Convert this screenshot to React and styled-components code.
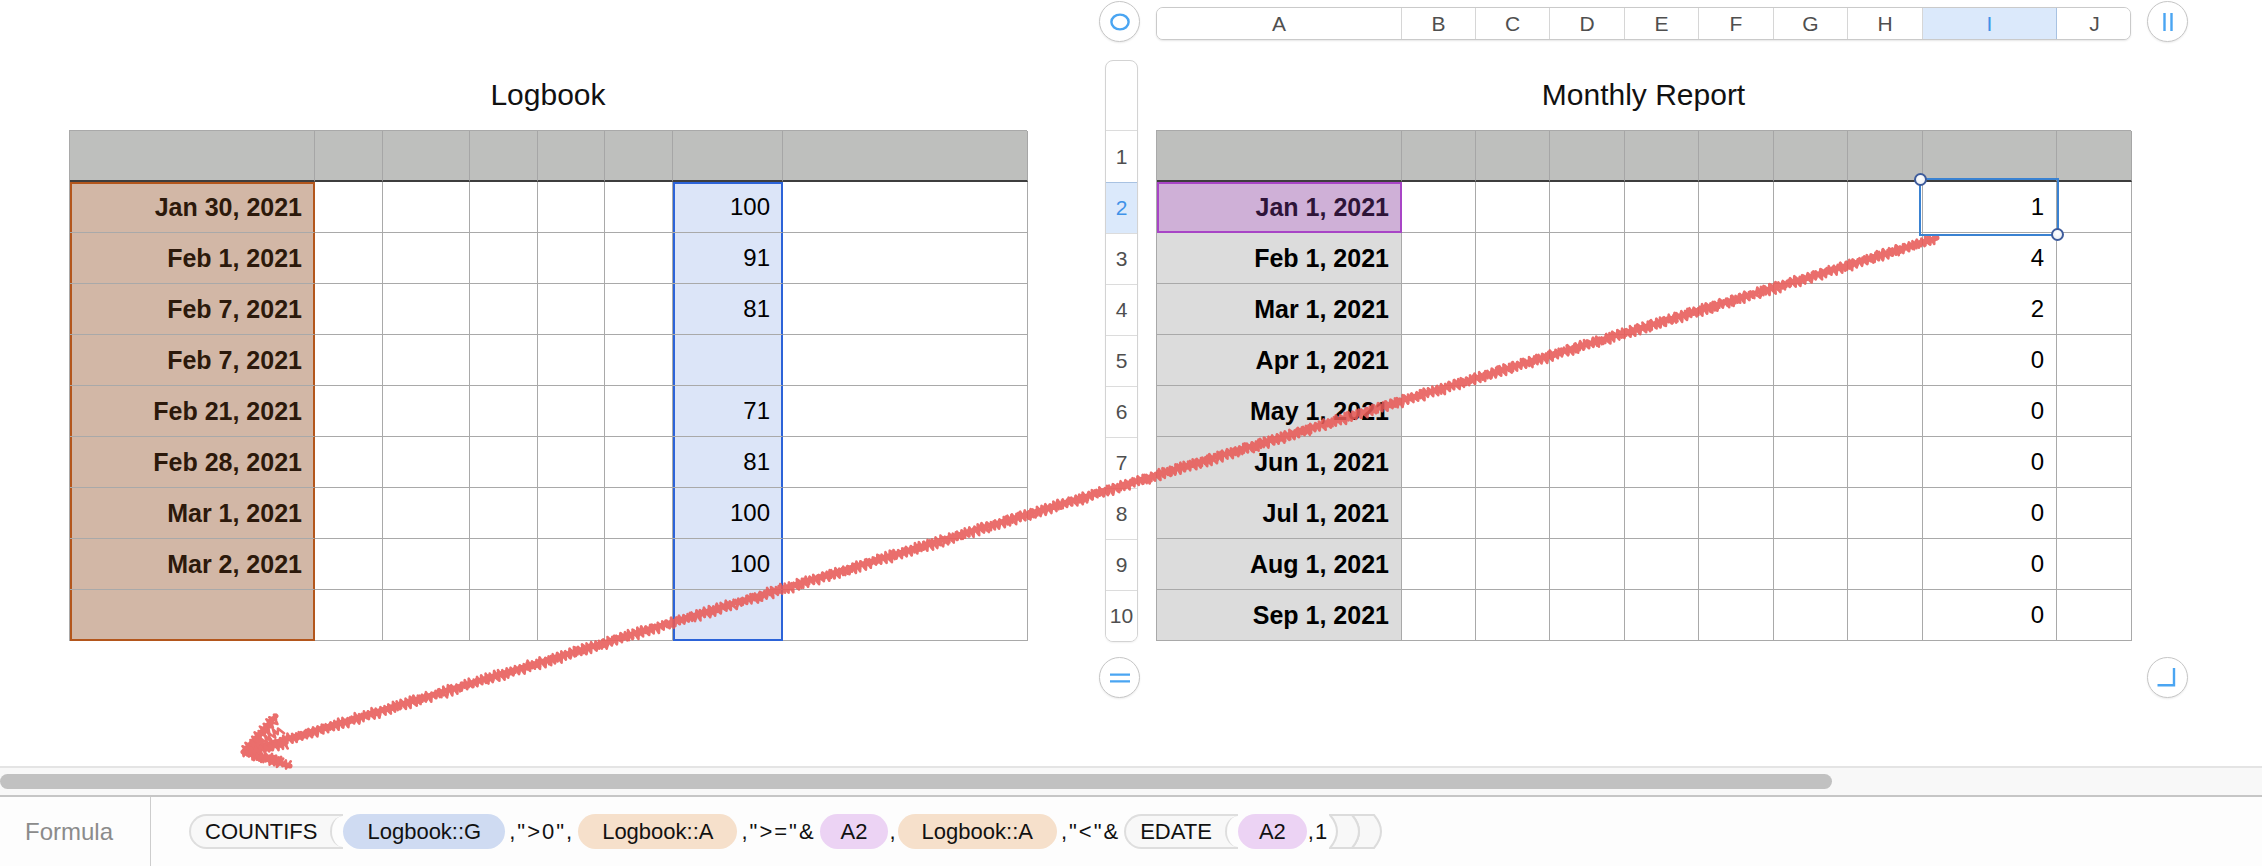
import React, { useMemo } from 'react';
import styled, { createGlobalStyle } from 'styled-components';

const GlobalStyle = createGlobalStyle`
  html, body {
    margin: 0;
    padding: 0;
    background: #fff;
  }
  body {
    font-family: "Liberation Sans", Arial, sans-serif;
    color: #000;
  }
  * {
    box-sizing: border-box;
  }
`;

const LOG_COLS = '245px 68px 87px 68px 67px 68px 110px 245px';
const REPORT_COLS = '245px 74px 74px 75px 74px 75px 74px 75px 134px 75px';
const COL_LETTERS = ['A', 'B', 'C', 'D', 'E', 'F', 'G', 'H', 'I', 'J'];

const logbook = [
    ['Jan 30, 2021', '100'],
    ['Feb 1, 2021', '91'],
    ['Feb 7, 2021', '81'],
    ['Feb 7, 2021', ''],
    ['Feb 21, 2021', '71'],
    ['Feb 28, 2021', '81'],
    ['Mar 1, 2021', '100'],
    ['Mar 2, 2021', '100'],
    ['', ''],
];

const report = [
    ['Jan 1, 2021', '1'],
    ['Feb 1, 2021', '4'],
    ['Mar 1, 2021', '2'],
    ['Apr 1, 2021', '0'],
    ['May 1, 2021', '0'],
    ['Jun 1, 2021', '0'],
    ['Jul 1, 2021', '0'],
    ['Aug 1, 2021', '0'],
    ['Sep 1, 2021', '0'],
];

const tones = {
    tan: { bg: '#d2b7a6', edge: '#b3561c', ink: '#2c190b' },
    blue: { bg: '#dce5f8', edge: '#2c63d8', ink: '#000' },
    gray: { bg: '#dcdcdc', edge: null, ink: '#000' },
    purple: { bg: '#cfb0d7', edge: '#a845c6', ink: '#2e1438' },
};

const edgeShadow = (tone, pos) => {
    const c = tone && tones[tone].edge;
    if (!c) return 'none';
    const s = [`inset 2px 0 0 ${c}`, `inset -1px 0 0 ${c}`];
    if (pos === 'top' || pos === 'single') s.push(`inset 0 2px 0 ${c}`);
    if (pos === 'bottom' || pos === 'single') s.push(`inset 0 -1px 0 ${c}`);
    return s.join(', ');
};

// deterministic jitter for the hand drawn arrow
const rand = i => {
    const v = Math.sin(i * 12.9898) * 43758.5453;
    return v - Math.floor(v);
};

const scribble = (x1, y1, x2, y2, amp, step, seed) => {
    const dx = x2 - x1;
    const dy = y2 - y1;
    const len = Math.hypot(dx, dy);
    const ux = dx / len;
    const uy = dy / len;
    const nx = -uy;
    const ny = ux;
    const n = Math.floor(len / step);
    let d = `M${x1} ${y1}`;
    for (let i = 1; i <= n; i++) {
        const t = i * step + (rand(seed + i * 3) - 0.5) * step * 0.6;
        const o = (i % 2 ? 1 : -1) * amp * (0.45 + 0.55 * rand(seed + i));
        d += ` L${(x1 + ux * t + nx * o).toFixed(1)} ${(y1 + uy * t + ny * o).toFixed(1)}`;
    }
    return d;
};

const Ring = () => (
    <svg width="22" height="20" viewBox="0 0 22 20">
        <ellipse cx="11" cy="10" rx="8.6" ry="7.4" fill="none" stroke="#4aa5f2" strokeWidth="2.4" />
    </svg>
);

const Pause = () => (
    <svg width="20" height="22" viewBox="0 0 20 22">
        <path d="M6.5 2v18M13.5 2v18" stroke="#4aa5f2" strokeWidth="2.4" />
    </svg>
);

const Equals = () => (
    <svg width="22" height="14" viewBox="0 0 22 14">
        <path d="M1 3.6h20M1 10.4h20" stroke="#4aa5f2" strokeWidth="2.4" />
    </svg>
);

const Corner = () => (
    <svg width="22" height="22" viewBox="0 0 22 22">
        <path d="M17 1v17.2H0.5" fill="none" stroke="#4aa5f2" strokeWidth="2.4" />
    </svg>
);

const Closers = () => (
    <svg width="56" height="35" viewBox="0 0 56 35">
        <path d="M23 1 Q37 17.5 23 34 L45 34 Q59 17.5 45 1 Z" fill="#f8f8f8" stroke="#dcdcdc" strokeWidth="2" />
        <path d="M1 1 Q15 17.5 1 34 L23 34 Q37 17.5 23 1 Z" fill="#f8f8f8" stroke="#dcdcdc" strokeWidth="2" />
    </svg>
);

const Arrow = () => {
    const paths = useMemo(() => {
        const tip = [243, 752];
        return [
            scribble(1937, 238, tip[0] + 4, tip[1] - 1, 5, 2.2, 11),
            scribble(1934, 241, tip[0] + 6, tip[1] + 1, 4.4, 2.7, 57),
            scribble(1938, 236, tip[0] + 8, tip[1] - 2, 3.5, 3.3, 77),
            scribble(tip[0], tip[1], 276, 716, 5, 2.2, 91),
            scribble(tip[0] + 2, tip[1], 278, 720, 4, 2.8, 111),
            scribble(tip[0], tip[1], 290, 766, 5, 2.2, 133),
            scribble(tip[0] + 2, tip[1] + 1, 286, 762, 4, 2.8, 151),
            scribble(250, 748, 282, 729, 5, 2.4, 171),
            scribble(252, 756, 283, 760, 5, 2.4, 199),
            scribble(247, 752, 288, 744, 5, 2.4, 233),
        ];
    }, []);
    return (
        <ArrowLayer width="2262" height="866" viewBox="0 0 2262 866">
            <g opacity="0.88" fill="none" stroke="#e85b58" strokeLinejoin="round" strokeLinecap="round">
                <path d="M1937 238 L247 751" strokeWidth="5" />
                <path d="M243 752 L276 716 M243 752 L290 766" strokeWidth="5" />
                {paths.map((d, i) => (
                    <path key={i} d={d} strokeWidth="2.6" />
                ))}
            </g>
        </ArrowLayer>
    );
};

const SheetTable = ({ cols, rows, toneA, toneNum, numCol, selectRow, purpleRow }) => {
    const colCount = cols.split(' ').length;
    return (
        <Grid $cols={cols}>
            {Array.from({ length: colCount }).map((_, i) => (
                <HeadCell key={`h${i}`} />
            ))}
            {rows.map((row, r) => {
                const pos = r === 0 ? 'top' : r === rows.length - 1 ? 'bottom' : 'mid';
                return Array.from({ length: colCount }).map((_, c) => {
                    if (c === 0) {
                        const tone = purpleRow === r ? 'purple' : toneA;
                        const p = purpleRow === r ? 'single' : pos;
                        return (
                            <Cell key={`${r}-${c}`} $tone={tone} $pos={p} $bold>
                                {row[0]}
                            </Cell>
                        );
                    }
                    if (c === numCol) {
                        return (
                            <Cell key={`${r}-${c}`} $tone={toneNum} $pos={pos}>
                                {row[1]}
                                {selectRow === r && (
                                    <Selection>
                                        <Handle $corner="tl" />
                                        <Handle $corner="br" />
                                    </Selection>
                                )}
                            </Cell>
                        );
                    }
                    return <Cell key={`${r}-${c}`} />;
                });
            })}
        </Grid>
    );
};

const App = () => {
    return (
        <Page>
            <GlobalStyle />
            <Canvas>
                <LogSection>
                    <Title>Logbook</Title>
                    <SheetTable cols={LOG_COLS} rows={logbook} toneA="tan" toneNum="blue" numCol={6} />
                </LogSection>

                <ReportSection>
                    <RoundButton>
                        <Ring />
                    </RoundButton>
                    <ColumnBar $cols={REPORT_COLS}>
                        {COL_LETTERS.map(l => (
                            <ColumnLabel key={l} $active={l === 'I'}>
                                {l}
                            </ColumnLabel>
                        ))}
                    </ColumnBar>
                    <RoundButton>
                        <Pause />
                    </RoundButton>

                    <RowRail>
                        <RailSpacer />
                        {Array.from({ length: 10 }).map((_, i) => (
                            <RailCell key={i} $first={i === 0} $active={i === 1}>
                                {i + 1}
                            </RailCell>
                        ))}
                    </RowRail>
                    <ReportBody>
                        <Title>Monthly Report</Title>
                        <SheetTable
                            cols={REPORT_COLS}
                            rows={report}
                            toneA="gray"
                            numCol={8}
                            selectRow={0}
                            purpleRow={0}
                        />
                    </ReportBody>
                    <div />

                    <RoundButton $bottom>
                        <Equals />
                    </RoundButton>
                    <div />
                    <RoundButton $bottom>
                        <Corner />
                    </RoundButton>
                </ReportSection>
            </Canvas>

            <ScrollTrack>
                <ScrollThumb />
            </ScrollTrack>

            <FormulaBar>
                <FormulaLabel>Formula</FormulaLabel>
                <Tokens>
                    <Func>
                        <FuncName>COUNTIFS</FuncName>
                        <OpenParen />
                    </Func>
                    <Ref $kind="blue">Logbook::G</Ref>
                    <Literal>,"&gt;0",</Literal>
                    <Ref $kind="peach">Logbook::A</Ref>
                    <Literal>,"&gt;="&amp;</Literal>
                    <Ref $kind="purple" $short>A2</Ref>
                    <Literal $tight>,</Literal>
                    <Ref $kind="peach">Logbook::A</Ref>
                    <Literal>,"&lt;"&amp;</Literal>
                    <Func>
                        <FuncName>EDATE</FuncName>
                        <OpenParen />
                    </Func>
                    <Ref $kind="purple" $short>A2</Ref>
                    <Literal $tight>,1</Literal>
                    <Closers />
                </Tokens>
            </FormulaBar>

            <Arrow />
        </Page>
    );
};

export default App;

const Page = styled.div`
    position: relative;
    width: 2262px;
    height: 866px;
    overflow: hidden;
    background: #fff;
`;

const Canvas = styled.main`
    display: flex;
    align-items: flex-start;
    gap: 72px;
    height: 766px;
    padding-left: 69px;
`;

const LogSection = styled.section`
    width: 958px;
    padding-top: 77px;
`;

const Title = styled.h2`
    margin: 0 0 17px 0;
    height: 36px;
    line-height: 36px;
    text-align: center;
    font-size: 30px;
    font-weight: 400;
    color: #111;
`;

const Grid = styled.div`
    display: grid;
    grid-template-columns: ${props => props.$cols};
    border-top: 1px solid #a9a9a9;
    border-left: 1px solid #a9a9a9;
`;

const HeadCell = styled.div`
    height: 51px;
    background: #bebfbd;
    border-right: 1px solid #a6a6a6;
    border-bottom: 2px solid #3d3d3d;
`;

const Cell = styled.div`
    position: relative;
    height: 51px;
    display: flex;
    align-items: center;
    justify-content: flex-end;
    padding-right: 12px;
    font-size: ${props => (props.$bold ? '25px' : '24px')};
    font-weight: ${props => (props.$bold ? 700 : 400)};
    color: ${props => (props.$tone ? tones[props.$tone].ink : '#000')};
    background: ${props => (props.$tone ? tones[props.$tone].bg : '#fff')};
    border-right: 1px solid ${props => (props.$tone && tones[props.$tone].edge) || '#a9a9a9'};
    border-bottom: 1px solid
        ${props =>
            props.$tone && tones[props.$tone].edge && (props.$pos === 'bottom' || props.$pos === 'single')
                ? tones[props.$tone].edge
                : '#a9a9a9'};
    box-shadow: ${props => edgeShadow(props.$tone, props.$pos)};
`;

const Selection = styled.div`
    position: absolute;
    z-index: 5;
    top: -4px;
    left: -4px;
    right: -3px;
    bottom: -4px;
    border: 2px solid #3a82d2;
    pointer-events: none;
`;

const Handle = styled.span`
    position: absolute;
    width: 13px;
    height: 13px;
    border-radius: 50%;
    background: radial-gradient(circle at 50% 35%, #ffffff 0%, #e9ecf1 100%);
    border: 2px solid #3e5c9c;
    ${props => (props.$corner === 'tl' ? 'top: -7px; left: -7px;' : 'bottom: -7px; right: -7px;')}
`;

const ReportSection = styled.section`
    display: grid;
    grid-template-columns: 41px 975px 41px;
    grid-template-rows: 44px auto auto;
    column-gap: 16px;
`;

const RoundButton = styled.div`
    width: 41px;
    height: 41px;
    margin-top: ${props => (props.$bottom ? '15px' : '1px')};
    display: flex;
    align-items: center;
    justify-content: center;
    border-radius: 50%;
    border: 1.5px solid #c6c6c6;
    background: #fff;
    box-shadow: 0 1px 2px rgba(0, 0, 0, 0.08);
`;

const ColumnBar = styled.div`
    display: grid;
    grid-template-columns: ${props => props.$cols};
    margin-top: 7px;
    height: 33px;
    border: 1px solid #cacaca;
    border-radius: 7px;
    overflow: hidden;
    background: #fff;
    box-shadow: 0 1px 2px rgba(0, 0, 0, 0.1);
`;

const ColumnLabel = styled.div`
    display: flex;
    align-items: center;
    justify-content: center;
    font-size: 21px;
    color: ${props => (props.$active ? '#3f92e8' : '#4f4f4f')};
    background: ${props => (props.$active ? '#dbe9fb' : '#fff')};
    border-right: 1px solid ${props => (props.$active ? '#a8c2e2' : '#d6d6d6')};

    &:last-child {
        border-right: none;
    }
`;

const RowRail = styled.div`
    width: 33px;
    margin: 16px 0 0 6px;
    align-self: start;
    border: 1px solid #d3d3d3;
    border-radius: 8px;
    background: #fff;
    overflow: hidden;
    box-shadow: 0 1px 2px rgba(0, 0, 0, 0.06);
`;

const RailSpacer = styled.div`
    height: 69px;
`;

const RailCell = styled.div`
    height: ${props => (props.$first ? '52px' : '51px')};
    display: flex;
    align-items: center;
    justify-content: center;
    font-size: 21px;
    color: ${props => (props.$active ? '#3f92e8' : '#4f4f4f')};
    background: ${props => (props.$active ? '#dbe9fb' : '#fff')};
    border-top: 1px solid ${props => (props.$active ? '#a8c2e2' : '#dcdcdc')};
`;

const ReportBody = styled.div`
    padding-top: 33px;
`;

const ScrollTrack = styled.div`
    display: flex;
    align-items: center;
    height: 31px;
    background: #f8f8f8;
    border-top: 2px solid #e4e4e4;
    border-bottom: 2px solid #c6c6c6;
`;

const ScrollThumb = styled.div`
    width: 1832px;
    height: 15px;
    border-radius: 8px;
    background: #c1c1c1;
`;

const FormulaBar = styled.footer`
    display: flex;
    height: 69px;
    background: #fdfdfd;
`;

const FormulaLabel = styled.div`
    width: 151px;
    display: flex;
    align-items: center;
    padding-left: 25px;
    font-size: 24px;
    color: #8b8b8b;
    border-right: 1px solid #cdcdcd;
`;

const Tokens = styled.div`
    display: flex;
    align-items: center;
    padding-left: 38px;
    font-size: 22px;
    color: #111;
`;

const Func = styled.span`
    display: inline-flex;
    align-items: stretch;
    height: 35px;
    padding-left: 14px;
    background: #f8f8f8;
    border: 2px solid #dedede;
    border-right: none;
    border-radius: 18px 0 0 18px;
`;

const FuncName = styled.span`
    display: flex;
    align-items: center;
    padding-right: 13px;
`;

const OpenParen = styled.span`
    width: 13px;
    background: #fdfdfd;
    border-left: 2px solid #dedede;
    border-radius: 100% 0 0 100% / 50% 0 0 50%;
`;

const refColors = {
    blue: '#cfdbf2',
    peach: '#f6e0cb',
    purple: '#ecd3f4',
};

const Ref = styled.span`
    display: inline-flex;
    align-items: center;
    height: 35px;
    padding: 0 ${props => (props.$short ? '21px' : '24px')};
    border-radius: 18px;
    background: ${props => refColors[props.$kind]};
`;

const Literal = styled.span`
    padding: 0 ${props => (props.$tight ? '1px' : '4px')};
    letter-spacing: ${props => (props.$tight ? '1px' : '2px')};
    white-space: pre;
`;

const ArrowLayer = styled.svg`
    position: absolute;
    top: 0;
    left: 0;
    pointer-events: none;
`;
